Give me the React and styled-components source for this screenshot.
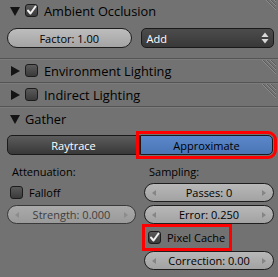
import React from "react";
import styled, { createGlobalStyle, css } from "styled-components";

const Global = createGlobalStyle`
  html, body {
    margin: 0;
    padding: 0;
    background: #727272;
  }
  body {
    font-family: "Open Sans", "DejaVu Sans", sans-serif;
    color: #000;
    width: 278px;
    height: 277px;
    overflow: hidden;
  }
`;

const Page = styled.div`
  width: 278px;
  background: #727272;
`;

const Panel = styled.section`
  ${(p) =>
    !p.first &&
    css`
      border-top: 1px solid #555555;
      box-shadow: inset 0 1px 0 #7c7c7c;
    `}
`;

const Header = styled.div`
  display: flex;
  align-items: center;
  height: ${(p) => (p.first ? 21 : 23)}px;
  padding-left: 10px;
  font-size: 12.8px;
  color: #000;
  position: relative;
`;

const Twisty = styled.svg`
  width: 10px;
  height: 10px;
  margin-right: 5px;
  flex: none;
`;

const Label = styled.span`
  margin-left: ${(p) => (p.tight ? 0 : 6)}px;
  white-space: nowrap;
`;

const Hatch = styled.svg`
  position: absolute;
  right: 2px;
  top: ${(p) => (p.first ? -4 : 1)}px;
  width: 14px;
  height: 14px;
`;

const Box = styled.span`
  display: inline-flex;
  align-items: center;
  justify-content: center;
  width: 13px;
  height: 13px;
  border-radius: 3px;
  border: 1px solid #1c1c1c;
  box-sizing: border-box;
  background: linear-gradient(#5a5a5a, #3a3a3a);
  flex: none;
`;

const Body = styled.div`
  padding: ${(p) => p.pad};
`;

const Row = styled.div`
  display: flex;
  gap: ${(p) => p.gap || 0}px;
`;

const Pill = styled.div`
  flex: 1;
  height: 20px;
  box-sizing: border-box;
  border: 1px solid #1e1e1e;
  border-radius: 10px;
  background: linear-gradient(#bdbdbd, #a4a4a4);
  display: flex;
  align-items: center;
  justify-content: center;
  font-size: 11px;
  color: #000;
  position: relative;
`;

const Dropdown = styled.div`
  flex: 1;
  height: 20px;
  box-sizing: border-box;
  border: 1px solid #1a1a1a;
  border-radius: 5px;
  background: linear-gradient(#4c4c4c, #383838);
  display: flex;
  align-items: center;
  justify-content: space-between;
  padding: 0 4px 0 5px;
  font-size: 11px;
  color: #fff;
`;

const Seg = styled.div`
  flex: 1;
  height: 20px;
  box-sizing: border-box;
  border: 1px solid #1a1a1a;
  display: flex;
  align-items: center;
  justify-content: center;
  font-size: 11px;
  ${(p) =>
    p.active
      ? css`
          background: linear-gradient(#5b88cb, #4a74b4);
          color: #000;
          border-radius: 0 5px 5px 0;
          outline: 3px solid #ff0000;
          outline-offset: 1px;
          position: relative;
        `
      : css`
          background: linear-gradient(#5c5c5c, #383838);
          color: #fff;
          border-radius: 5px 0 0 5px;
        `}
`;

const Cols = styled.div`
  display: grid;
  grid-template-columns: 129px 130px;
  column-gap: 8px;
  padding: 7px 0 0 7px;
`;

const Col = styled.div`
  display: flex;
  flex-direction: column;
`;

const ColTitle = styled.div`
  height: 18px;
  display: flex;
  align-items: center;
  padding-left: ${(p) => p.indent}px;
  font-size: 11px;
  margin-bottom: 3px;
`;

const Check = styled.label`
  display: flex;
  align-items: center;
  gap: 6px;
  height: ${(p) => (p.boxed ? 21 : 19)}px;
  padding-left: 3px;
  font-size: 11px;
  width: fit-content;
  ${(p) =>
    p.boxed &&
    css`
      margin: 3px 0 0 1px;
      padding: 0 4px 0 3px;
      outline: 3px solid #ff0000;
      outline-offset: 0;
    `}
`;

const Num = styled(Pill)`
  flex: none;
  height: 19px;
  border-radius: 9.5px;
  margin-top: ${(p) => p.mt || 0}px;
  color: ${(p) => (p.disabled ? "#3e3e3e" : "#000")};
  background: ${(p) =>
    p.disabled
      ? "linear-gradient(#aaaaaa, #9a9a9a)"
      : "linear-gradient(#b8b8b8, #a2a2a2)"};
  border-color: ${(p) => (p.disabled ? "#3a3a3a" : "#1e1e1e")};
`;

const Arrow = styled.svg`
  position: absolute;
  top: 6px;
  width: 4px;
  height: 6px;
  ${(p) => (p.right ? "right: 7px;" : "left: 7px;")}
`;

const TriDown = () => (
  <Twisty viewBox="0 0 10 10">
    <path d="M0 1 L10 1 L5 10 Z" fill="#141414" />
  </Twisty>
);

const TriRight = () => (
  <Twisty viewBox="0 0 10 10">
    <path d="M1 0 L10 5 L1 10 Z" fill="#141414" />
  </Twisty>
);

const Tick = () => (
  <svg width="11" height="11" viewBox="0 0 11 11">
    <path
      d="M2 5.5 L4.5 8.5 L9.5 1.5"
      fill="none"
      stroke="#f2f2f2"
      strokeWidth="2"
      strokeLinecap="round"
      strokeLinejoin="round"
    />
  </svg>
);

const Corner = ({ first }) => (
  <Hatch first={first} viewBox="0 0 14 14">
    {[0, 4, 8].map((o) => (
      <g key={o}>
        <line x1={o} y1={0} x2={14} y2={14 - o} stroke="#8c8c8c" strokeWidth="1" />
        <line x1={o + 1} y1={0} x2={14} y2={13 - o} stroke="#5e5e5e" strokeWidth="1" />
      </g>
    ))}
  </Hatch>
);

const Slider = ({ children, mt, disabled }) => (
  <Num mt={mt} disabled={disabled}>
    <Arrow viewBox="0 0 4 6">
      <path d="M4 0 L0 3 L4 6 Z" fill={disabled ? "#8c8c8c" : "#858585"} />
    </Arrow>
    {children}
    <Arrow right viewBox="0 0 4 6">
      <path d="M0 0 L4 3 L0 6 Z" fill={disabled ? "#8c8c8c" : "#858585"} />
    </Arrow>
  </Num>
);

export default function App() {
  return (
    <Page>
      <Global />
      <Panel first>
        <Header first>
          <TriDown />
          <Box>
            <Tick />
          </Box>
          <Label>Ambient Occlusion</Label>
          <Corner first />
        </Header>
        <Body pad="7px 4px 10px 7px">
          <Row gap={9}>
            <Pill>Factor: 1.00</Pill>
            <Dropdown>
              <span>Add</span>
              <svg width="8" height="12" viewBox="0 0 8 12">
                <path d="M4 0.5 L7.5 5 L0.5 5 Z" fill="#d8d8d8" />
                <path d="M4 11.5 L7.5 7 L0.5 7 Z" fill="#d8d8d8" />
              </svg>
            </Dropdown>
          </Row>
        </Body>
      </Panel>
      <Panel>
        <Header>
          <TriRight />
          <Box />
          <Label>Environment Lighting</Label>
          <Corner />
        </Header>
      </Panel>
      <Panel>
        <Header>
          <TriRight />
          <Box />
          <Label>Indirect Lighting</Label>
          <Corner />
        </Header>
      </Panel>
      <Panel>
        <Header>
          <TriDown />
          <Label tight>Gather</Label>
        </Header>
        <Body pad="5px 5px 0 7px">
          <Row>
            <Seg>Raytrace</Seg>
            <Seg active>Approximate</Seg>
          </Row>
        </Body>
        <Cols>
          <Col>
            <ColTitle indent={5}>Attenuation:</ColTitle>
            <Check>
              <Box />
              Falloff
            </Check>
            <Slider mt={3} disabled>
              Strength: 0.000
            </Slider>
          </Col>
          <Col>
            <ColTitle indent={5}>Sampling:</ColTitle>
            <Slider>Passes: 0</Slider>
            <Slider mt={3}>Error: 0.250</Slider>
            <Check boxed>
              <Box>
                <Tick />
              </Box>
              Pixel Cache
            </Check>
            <Slider mt={3}>Correction: 0.00</Slider>
          </Col>
        </Cols>
      </Panel>
    </Page>
  );
}
